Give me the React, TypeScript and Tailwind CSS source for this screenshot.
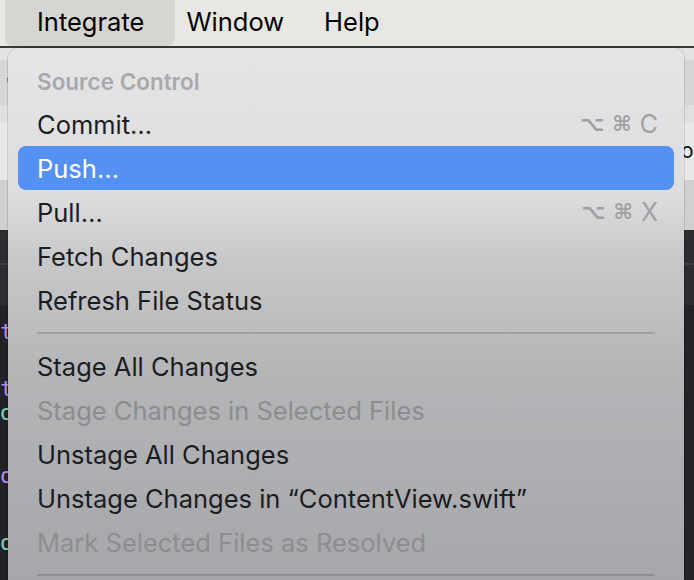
import React from "react";

type Item =
  | { kind: "header"; label: string }
  | { kind: "sep" }
  | { kind: "item"; label: string; shortcut?: string; active?: boolean; disabled?: boolean };

const ITEMS: Item[] = [
  { kind: "header", label: "Source Control" },
  { kind: "item", label: "Commit…", shortcut: "C" },
  { kind: "item", label: "Push…", active: true },
  { kind: "item", label: "Pull…", shortcut: "X" },
  { kind: "item", label: "Fetch Changes" },
  { kind: "item", label: "Refresh File Status" },
  { kind: "sep" },
  { kind: "item", label: "Stage All Changes" },
  { kind: "item", label: "Stage Changes in Selected Files", disabled: true },
  { kind: "item", label: "Unstage All Changes" },
  { kind: "item", label: "Unstage Changes in “ContentView.swift”" },
  { kind: "item", label: "Mark Selected Files as Resolved", disabled: true },
  { kind: "sep" },
];

const FONT = "font-['Inter','Liberation_Sans',sans-serif]";

function Shortcut({ letter }: { letter: string }) {
  return (
    <span className="flex items-center gap-[8px] text-[#a0a0a2] font-['DejaVu_Sans','Inter',sans-serif] text-[21px] font-semibold">
      <span>⌥</span>
      <span>⌘</span>
      <span className={`${FONT} text-[25px] font-normal`}>{letter}</span>
    </span>
  );
}

function MenuRow({ item }: { item: Item }) {
  if (item.kind === "sep") {
    return (
      <div className="flex h-[22px] items-center px-[19px]">
        <div className="h-[2px] w-full bg-black/15" />
      </div>
    );
  }
  if (item.kind === "header") {
    return (
      <div className="flex h-[44px] items-center px-[19px] pt-[3px] text-[22.5px] font-semibold text-[#a9a9ab]">
        {item.label}
      </div>
    );
  }
  return (
    <div
      className={`flex h-[44px] items-center justify-between rounded-[8px] pl-[19px] pr-[16px] pt-[2px] text-[25.5px] ${
        item.active ? "bg-[#5591f5] text-white" : item.disabled ? "text-[#8d8d90]" : "text-[#1d1d1f]"
      }`}
    >
      <span>{item.label}</span>
      {item.shortcut && <Shortcut letter={item.shortcut} />}
    </div>
  );
}

export default function App() {
  return (
    <div className={`relative h-[580px] w-[694px] overflow-hidden ${FONT}`}>
      {/* menu bar */}
      <div className="flex h-[46px] items-stretch bg-[#e9e7e3] pl-[5px] text-[25.5px] text-black">
        <div className="flex items-center rounded-b-[8px] bg-[#d6d5d1] pb-[2px] pl-[32px] pr-[31px]">Integrate</div>
        <div className="flex items-center pb-[2px] pl-[11px]">Window</div>
        <div className="flex items-center pb-[2px] pl-[40px]">Help</div>
      </div>
      <div className="h-[2px] bg-[#3a3a3a]" />

      {/* window behind: toolbar rows */}
      <div className="h-[12px] bg-[#e3e3e3]" />
      <div className="flex h-[45px] items-center bg-[#d6d6d6] pl-[6px] text-[14px] text-[#333]">*</div>
      <div className="h-[17px] bg-[#e0e0e0]" />
      <div className="flex h-[58px] items-center bg-[#e8e8e8] pl-[681px] text-[21px] text-[#111]">o</div>
      <div className="h-[50px] bg-[#d0d0d0]" />

      {/* editor */}
      <div className="h-[33px] bg-[#2c2c31]" />
      <div className="h-[2px] bg-[#3e3e43]" />
      <div className="h-[40px] bg-[#2c2c31]" />
      <div className="flex h-[280px] flex-col bg-[#222227] pt-[16px] font-['DejaVu_Sans_Mono',monospace] text-[22px] leading-[22px]">
        <div className="h-[24px] text-[#b88bf0]">t</div>
        <div className="h-[33px]" />
        <div className="h-[24px] text-[#b88bf0]">t</div>
        <div className="h-[22px] text-[#7fd3be]">o</div>
        <div className="h-[41px]" />
        <div className="h-[24px] text-[#b88bf0]">o</div>
        <div className="h-[43px]" />
        <div className="h-[24px] text-[#7fd3be]">o</div>
      </div>

      {/* dropdown menu */}
      <div className="absolute left-[8px] top-[48px] h-[560px] w-[676px] rounded-t-[11px] bg-[linear-gradient(to_bottom,#e5e5e7_0%,#dddddf_26%,#c8c8ca_38%,#b4b5b7_58%,#a4a5a8_100%)] px-[10px] pt-[10px] shadow-[0_0_0_1px_rgba(0,0,0,0.12)]">
        {ITEMS.map((item, i) => (
          <MenuRow key={i} item={item} />
        ))}
      </div>
    </div>
  );
}
